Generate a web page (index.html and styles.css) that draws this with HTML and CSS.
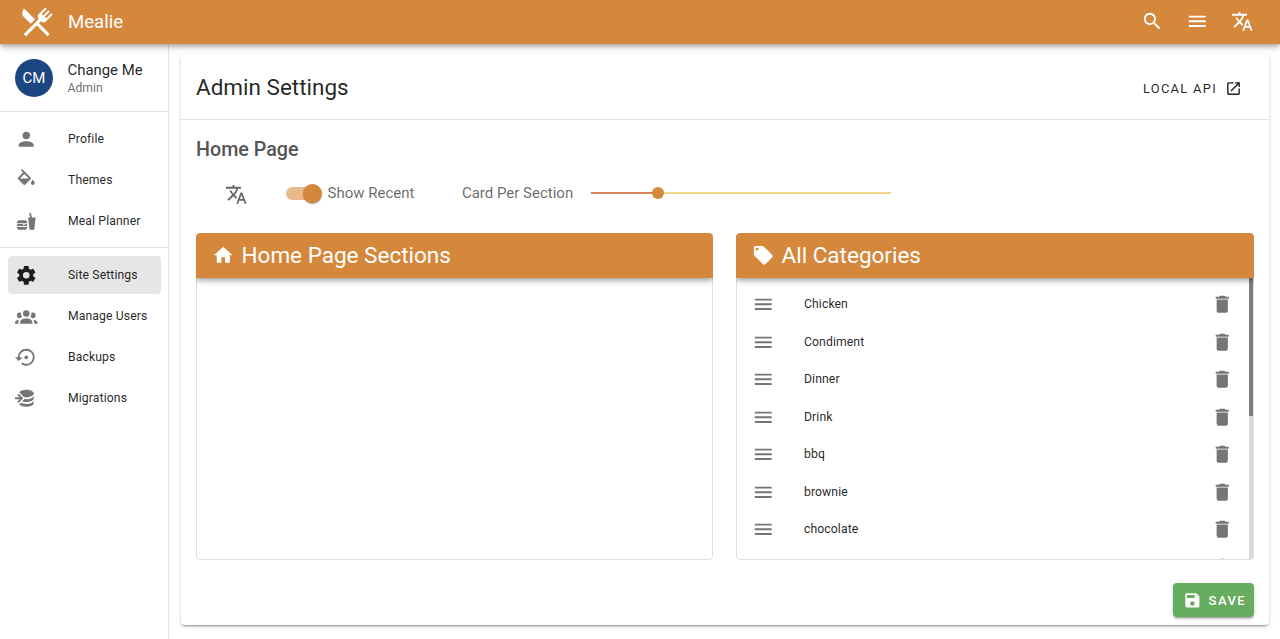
FILE: index.html
```html
<!DOCTYPE html>
<html lang="en">
<head>
<meta charset="utf-8">
<title>Mealie</title>
<link rel="stylesheet" href="styles.css">
</head>
<body>
<header class="appbar">
  <svg class="logo" viewBox="0 0 24 24"><path d="M8.1,13.34L3.91,9.16C2.35,7.59 2.35,5.06 3.91,3.5L10.93,10.5L8.1,13.34M13.41,13L20.29,19.88L18.88,21.29L12,14.41L5.12,21.29L3.71,19.88L13.36,10.22L13.16,10C12.38,9.23 12.38,7.97 13.16,7.19L17.5,2.82L18.43,3.74L15.19,7L16.15,7.94L19.39,4.69L20.31,5.61L17.06,8.85L18,9.81L21.26,6.56L22.18,7.5L17.81,11.84C17.03,12.62 15.77,12.62 15,11.84L14.78,11.64L13.41,13Z"/></svg>
  <span class="brand">Mealie</span>
  <div class="appbar-actions">
    <svg class="icon" viewBox="0 0 24 24"><path d="M9.5,3A6.5,6.5 0 0,1 16,9.5C16,11.11 15.41,12.59 14.44,13.73L14.71,14H15.5L20.5,19L19,20.5L14,15.5V14.71L13.73,14.44C12.59,15.41 11.11,16 9.5,16A6.5,6.5 0 0,1 3,9.5A6.5,6.5 0 0,1 9.5,3M9.5,5C7,5 5,7 5,9.5C5,12 7,14 9.5,14C12,14 14,12 14,9.5C14,7 12,5 9.5,5Z"/></svg>
    <svg class="icon" viewBox="0 0 24 24"><path d="M3,6H21V8H3V6M3,11H21V13H3V11M3,16H21V18H3V16Z"/></svg>
    <svg class="icon" viewBox="0 0 24 24"><path d="M12.87,15.07L10.33,12.56L10.36,12.53C12.1,10.59 13.34,8.36 14.07,6H17V4H10V2H8V4H1V6H12.17C11.5,7.92 10.44,9.75 9,11.35C8.07,10.32 7.3,9.19 6.69,8H4.69C5.42,9.63 6.42,11.17 7.67,12.56L2.58,17.58L4,19L9,14L12.11,17.11L12.87,15.07M18.5,10H16.5L12,22H14L15.12,19H19.87L21,22H23L18.5,10M15.88,17L17.5,12.67L19.12,17H15.88Z"/></svg>
  </div>
</header>
<div class="shell">
  <aside class="sidebar">
    <div class="user">
      <div class="avatar">CM</div>
      <div class="user-text">
        <div class="user-name">Change Me</div>
        <div class="user-role">Admin</div>
      </div>
    </div>
    <nav class="nav">
      <a class="nav-item"><svg class="icon" viewBox="0 0 24 24"><path d="M12,4A4,4 0 0,1 16,8A4,4 0 0,1 12,12A4,4 0 0,1 8,8A4,4 0 0,1 12,4M12,14C16.42,14 20,15.79 20,18V20H4V18C4,15.79 7.58,14 12,14Z"/></svg><span>Profile</span></a>
      <a class="nav-item"><svg class="icon" viewBox="0 0 24 24"><path d="M19,11.5C19,11.5 17,13.67 17,15A2,2 0 0,0 19,17A2,2 0 0,0 21,15C21,13.67 19,11.5 19,11.5M5.21,10L10,5.21L14.79,10M16.56,8.94L7.62,0L6.21,1.41L8.59,3.79L3.44,8.94C2.85,9.5 2.85,10.47 3.44,11.06L8.94,16.56C9.23,16.85 9.62,17 10,17C10.38,17 10.77,16.85 11.06,16.56L16.56,11.06C17.15,10.47 17.15,9.5 16.56,8.94Z"/></svg><span>Themes</span></a>
      <a class="nav-item"><svg class="icon" viewBox="0 0 24 24"><path d="M15.5,21L14,8H16.23L15.1,3.46L16.84,3L18.09,8H22L20.5,21H15.5M5,11H10A3,3 0 0,1 13,14H2A3,3 0 0,1 5,11M13,18A3,3 0 0,1 10,21H5A3,3 0 0,1 2,18H13M3,15H8L9.5,16.5L11,15H12A1,1 0 0,1 13,16A1,1 0 0,1 12,17H3A1,1 0 0,1 2,16A1,1 0 0,1 3,15Z"/></svg><span>Meal Planner</span></a>
    </nav>
    <nav class="nav nav-admin">
      <a class="nav-item is-active"><svg class="icon" viewBox="0 0 24 24"><path d="M12,15.5A3.5,3.5 0 0,1 8.5,12A3.5,3.5 0 0,1 12,8.5A3.5,3.5 0 0,1 15.5,12A3.5,3.5 0 0,1 12,15.5M19.43,12.97C19.47,12.65 19.5,12.33 19.5,12C19.5,11.67 19.47,11.34 19.43,11L21.54,9.37C21.73,9.22 21.78,8.95 21.66,8.73L19.66,5.27C19.54,5.05 19.27,4.96 19.05,5.05L16.56,6.05C16.04,5.66 15.5,5.32 14.87,5.07L14.5,2.42C14.46,2.18 14.25,2 14,2H10C9.75,2 9.54,2.18 9.5,2.42L9.13,5.07C8.5,5.32 7.96,5.66 7.44,6.05L4.95,5.05C4.73,4.96 4.46,5.05 4.34,5.27L2.34,8.73C2.21,8.95 2.27,9.22 2.46,9.37L4.57,11C4.53,11.34 4.5,11.67 4.5,12C4.5,12.33 4.53,12.65 4.57,12.97L2.46,14.63C2.27,14.78 2.21,15.05 2.34,15.27L4.34,18.73C4.46,18.95 4.73,19.03 4.95,18.95L7.44,17.94C7.96,18.34 8.5,18.68 9.13,18.93L9.5,21.58C9.54,21.82 9.75,22 10,22H14C14.25,22 14.46,21.82 14.5,21.58L14.87,18.93C15.5,18.67 16.04,18.34 16.56,17.94L19.05,18.95C19.27,19.03 19.54,18.95 19.66,18.73L21.66,15.27C21.78,15.05 21.73,14.78 21.54,14.63L19.43,12.97Z"/></svg><span>Site Settings</span></a>
      <a class="nav-item"><svg class="icon" viewBox="0 0 24 24"><path d="M12,5.5A3.5,3.5 0 0,1 15.5,9A3.5,3.5 0 0,1 12,12.5A3.5,3.5 0 0,1 8.5,9A3.5,3.5 0 0,1 12,5.5M5,8C5.56,8 6.08,8.15 6.53,8.42C6.38,9.85 6.8,11.27 7.66,12.38C7.16,13.34 6.16,14 5,14A3,3 0 0,1 2,11A3,3 0 0,1 5,8M19,8A3,3 0 0,1 22,11A3,3 0 0,1 19,14C17.84,14 16.84,13.34 16.34,12.38C17.2,11.27 17.62,9.85 17.47,8.42C17.92,8.15 18.44,8 19,8M5.5,18.25C5.5,16.18 8.41,14.5 12,14.5C15.59,14.5 18.5,16.18 18.5,18.25V20H5.5V18.25M0,20V18.5C0,17.11 1.89,15.94 4.45,15.6C3.86,16.28 3.5,17.22 3.5,18.25V20H0M24,20H20.5V18.25C20.5,17.22 20.14,16.28 19.55,15.6C22.11,15.94 24,17.11 24,18.5V20Z"/></svg><span>Manage Users</span></a>
      <a class="nav-item"><svg class="icon" viewBox="0 0 24 24"><path d="M12,3A9,9 0 0,0 3,12H0L4,16L8,12H5A7,7 0 0,1 12,5A7,7 0 0,1 19,12A7,7 0 0,1 12,19C10.5,19 9.09,18.5 7.94,17.7L6.5,19.14C8.04,20.3 9.94,21 12,21A9,9 0 0,0 21,12A9,9 0 0,0 12,3M14,12A2,2 0 0,0 12,10A2,2 0 0,0 10,12A2,2 0 0,0 12,14A2,2 0 0,0 14,12Z"/></svg><span>Backups</span></a>
      <a class="nav-item"><svg class="icon" viewBox="0 0 24 24"><path d="M12,3C8.59,3 5.69,4.07 4.54,5.57L9.79,10.82C10.5,10.93 11.22,11 12,11C16.42,11 20,9.21 20,7C20,4.79 16.42,3 12,3M3.92,7.08L2.5,8.5L5,11H0V13H5L2.5,15.5L3.92,16.92L8.84,12M20,9C20,11.21 16.42,13 12,13C11.34,13 10.7,12.95 10.09,12.87L7.62,15.34C8.88,15.75 10.38,16 12,16C16.42,16 20,14.21 20,12M20,14C20,16.21 16.42,18 12,18C9.72,18 7.67,17.5 6.21,16.75L4.53,18.43C5.67,19.93 8.58,21 12,21C16.42,21 20,19.21 20,17"/></svg><span>Migrations</span></a>
    </nav>
  </aside>
  <main class="main">
    <section class="card">
      <div class="card-head">
        <h1 class="card-title">Admin Settings</h1>
        <a class="api-link">LOCAL API<svg class="icon-sm" viewBox="0 0 24 24"><path d="M14,3V5H17.59L7.76,14.83L9.17,16.24L19,6.41V10H21V3M19,19H5V5H12V3H5C3.89,3 3,3.9 3,5V19A2,2 0 0,0 5,21H19A2,2 0 0,0 21,19V12H19V19Z"/></svg></a>
      </div>
      <div class="card-body">
        <h2 class="section-title">Home Page</h2>
        <div class="controls">
          <svg class="lang-icon" viewBox="0 0 24 24"><path d="M12.87,15.07L10.33,12.56L10.36,12.53C12.1,10.59 13.34,8.36 14.07,6H17V4H10V2H8V4H1V6H12.17C11.5,7.92 10.44,9.75 9,11.35C8.07,10.32 7.3,9.19 6.69,8H4.69C5.42,9.63 6.42,11.17 7.67,12.56L2.58,17.58L4,19L9,14L12.11,17.11L12.87,15.07M18.5,10H16.5L12,22H14L15.12,19H19.87L21,22H23L18.5,10M15.88,17L17.5,12.67L19.12,17H15.88Z"/></svg>
          <div class="switch"><span class="switch-thumb"></span></div>
          <span class="control-label show-label">Show Recent</span>
          <span class="control-label card-label">Card Per Section</span>
          <div class="slider"><span class="slider-fill"></span><span class="slider-thumb"></span></div>
        </div>
        <div class="panels">
          <div class="panel">
            <div class="panel-head">
              <svg class="panel-icon" viewBox="0 0 24 24"><path d="M10,20V14H14V20H19V12H22L12,3L2,12H5V20H10Z"/></svg>
              <span>Home Page Sections</span>
            </div>
            <div class="panel-body"></div>
          </div>
          <div class="panel">
            <div class="panel-head">
              <svg class="panel-icon" viewBox="0 0 24 24"><path d="M5.5,7A1.5,1.5 0 0,1 4,5.5A1.5,1.5 0 0,1 5.5,4A1.5,1.5 0 0,1 7,5.5A1.5,1.5 0 0,1 5.5,7M21.41,11.58L12.41,2.58C12.05,2.22 11.55,2 11,2H4C2.89,2 2,2.89 2,4V11C2,11.55 2.22,12.05 2.59,12.41L11.58,21.41C11.95,21.77 12.45,22 13,22C13.55,22 14.05,21.77 14.41,21.41L21.41,14.41C21.78,14.05 22,13.55 22,13C22,12.44 21.77,11.94 21.41,11.58Z"/></svg>
              <span>All Categories</span>
            </div>
            <div class="panel-body cat-list">
              <div class="cat-row"><svg class="row-icon" viewBox="0 0 24 24"><path d="M3,6H21V8H3V6M3,11H21V13H3V11M3,16H21V18H3V16Z"/></svg><span class="cat-name">Chicken</span><svg class="row-icon" viewBox="0 0 24 24"><path d="M19,4H15.5L14.5,3H9.5L8.5,4H5V6H19M6,19A2,2 0 0,0 8,21H16A2,2 0 0,0 18,19V7H6V19Z"/></svg></div>
              <div class="cat-row"><svg class="row-icon" viewBox="0 0 24 24"><path d="M3,6H21V8H3V6M3,11H21V13H3V11M3,16H21V18H3V16Z"/></svg><span class="cat-name">Condiment</span><svg class="row-icon" viewBox="0 0 24 24"><path d="M19,4H15.5L14.5,3H9.5L8.5,4H5V6H19M6,19A2,2 0 0,0 8,21H16A2,2 0 0,0 18,19V7H6V19Z"/></svg></div>
              <div class="cat-row"><svg class="row-icon" viewBox="0 0 24 24"><path d="M3,6H21V8H3V6M3,11H21V13H3V11M3,16H21V18H3V16Z"/></svg><span class="cat-name">Dinner</span><svg class="row-icon" viewBox="0 0 24 24"><path d="M19,4H15.5L14.5,3H9.5L8.5,4H5V6H19M6,19A2,2 0 0,0 8,21H16A2,2 0 0,0 18,19V7H6V19Z"/></svg></div>
              <div class="cat-row"><svg class="row-icon" viewBox="0 0 24 24"><path d="M3,6H21V8H3V6M3,11H21V13H3V11M3,16H21V18H3V16Z"/></svg><span class="cat-name">Drink</span><svg class="row-icon" viewBox="0 0 24 24"><path d="M19,4H15.5L14.5,3H9.5L8.5,4H5V6H19M6,19A2,2 0 0,0 8,21H16A2,2 0 0,0 18,19V7H6V19Z"/></svg></div>
              <div class="cat-row"><svg class="row-icon" viewBox="0 0 24 24"><path d="M3,6H21V8H3V6M3,11H21V13H3V11M3,16H21V18H3V16Z"/></svg><span class="cat-name">bbq</span><svg class="row-icon" viewBox="0 0 24 24"><path d="M19,4H15.5L14.5,3H9.5L8.5,4H5V6H19M6,19A2,2 0 0,0 8,21H16A2,2 0 0,0 18,19V7H6V19Z"/></svg></div>
              <div class="cat-row"><svg class="row-icon" viewBox="0 0 24 24"><path d="M3,6H21V8H3V6M3,11H21V13H3V11M3,16H21V18H3V16Z"/></svg><span class="cat-name">brownie</span><svg class="row-icon" viewBox="0 0 24 24"><path d="M19,4H15.5L14.5,3H9.5L8.5,4H5V6H19M6,19A2,2 0 0,0 8,21H16A2,2 0 0,0 18,19V7H6V19Z"/></svg></div>
              <div class="cat-row"><svg class="row-icon" viewBox="0 0 24 24"><path d="M3,6H21V8H3V6M3,11H21V13H3V11M3,16H21V18H3V16Z"/></svg><span class="cat-name">chocolate</span><svg class="row-icon" viewBox="0 0 24 24"><path d="M19,4H15.5L14.5,3H9.5L8.5,4H5V6H19M6,19A2,2 0 0,0 8,21H16A2,2 0 0,0 18,19V7H6V19Z"/></svg></div>
              <div class="cat-row"><span class="row-spacer"></span><span class="cat-name"></span><svg class="row-icon" viewBox="0 0 24 24"><path d="M19,4H15.5L14.5,3H9.5L8.5,4H5V6H19M6,19A2,2 0 0,0 8,21H16A2,2 0 0,0 18,19V7H6V19Z"/></svg></div>
              <div class="scrollbar"><span class="scrollbar-thumb"></span></div>
            </div>
          </div>
        </div>
        <div class="actions">
          <button class="save"><svg class="save-icon" viewBox="0 0 24 24"><path d="M15,9H5V5H15M12,19A3,3 0 0,1 9,16A3,3 0 0,1 12,13A3,3 0 0,1 15,16A3,3 0 0,1 12,19M17,3H5C3.89,3 3,3.9 3,5V19A2,2 0 0,0 5,21H19A2,2 0 0,0 21,19V7L17,3Z"/></svg>SAVE</button>
        </div>
      </div>
    </section>
  </main>
</div>
</body>
</html>
```
FILE: styles.css
```css
* { box-sizing: border-box; }
html, body { height: 100%; }
body {
  margin: 0;
  height: 639px;
  overflow: hidden;
  display: flex;
  flex-direction: column;
  background: #fff;
  font-family: Roboto, "Liberation Sans", sans-serif;
  color: rgba(0, 0, 0, .87);
}
svg { display: block; flex: none; fill: currentColor; }
h1, h2 { margin: 0; }

.appbar {
  position: relative;
  z-index: 2;
  flex: none;
  height: 44px;
  display: flex;
  align-items: center;
  padding-left: 18px;
  padding-right: 27px;
  background: #d5873c;
  color: #fff;
  box-shadow: 0 2px 4px -1px rgba(0,0,0,.2), 0 4px 5px rgba(0,0,0,.14), 0 1px 10px rgba(0,0,0,.12);
}
.logo { width: 37.5px; height: 37.5px; }
.brand { margin-left: 12.5px; font-size: 18.6px; font-weight: 400; }
.appbar-actions { margin-left: auto; display: flex; gap: 22.5px; margin-top: -1px; }
.icon { width: 22.5px; height: 22.5px; }

.shell { flex: 1; min-height: 0; display: flex; }
.sidebar {
  flex: none;
  width: 169px;
  border-right: 1px solid #e4e4e4;
}
.user {
  height: 68px;
  display: flex;
  align-items: center;
  padding-left: 15px;
  border-bottom: 1px solid #e4e4e4;
}
.avatar {
  width: 38px;
  height: 38px;
  margin-right: 14.5px;
  border-radius: 50%;
  background: #1c4682;
  color: #fff;
  font-size: 15px;
  display: flex;
  align-items: center;
  justify-content: center;
}
.user-text { margin-top: 1px; }
.user-name { font-size: 14.9px; line-height: 20px; }
.user-role { font-size: 12.2px; line-height: 17px; color: rgba(0,0,0,.6); }

.nav { padding: 8px 7px 7px 8px; }
.nav-admin { padding-top: 8.6px; border-top: 1px solid #e4e4e4; }
.nav-item {
  height: 37.5px;
  margin-bottom: 3.5px;
  padding-left: 7px;
  display: flex;
  align-items: center;
  border-radius: 4px;
  font-size: 12.2px;
  font-weight: 400;
  letter-spacing: .12px;
  color: rgba(0,0,0,.87);
}
.nav-item:last-child { margin-bottom: 0; }
.nav-item .icon { margin-right: 30.5px; color: rgba(0,0,0,.54); }
.nav-item.is-active { background: #e6e6e6; }
.nav-item.is-active .icon { color: rgba(0,0,0,.87); }

.main { flex: 1; min-width: 0; padding: 11px 11px 14px 12px; }
.card {
  height: 100%;
  background: #fff;
  border-radius: 4px;
  display: flex;
  flex-direction: column;
  box-shadow: 0 3px 1px -2px rgba(0,0,0,.2), 0 2px 2px rgba(0,0,0,.14), 0 1px 5px rgba(0,0,0,.12);
}
.card-head {
  flex: none;
  height: 65px;
  display: flex;
  align-items: center;
  justify-content: space-between;
  padding: 0 27px 0 15px;
  border-bottom: 1px solid #e0e0e0;
}
.card-title { font-size: 22.5px; font-weight: 400; margin-top: -1px; }
.api-link {
  display: flex;
  align-items: center;
  gap: 8px;
  font-size: 12.9px;
  font-weight: 400;
  letter-spacing: 1.3px;
  margin-top: 2px;
}
.icon-sm { width: 17px; height: 17px; }

.card-body { flex: 1; min-height: 0; padding: 0 15px; display: flex; flex-direction: column; }
.section-title { margin-top: 19px; font-size: 19.7px; line-height: 22px; font-weight: 500; color: #555; }
.controls {
  height: 38px;
  margin-top: 13px;
  display: flex;
  align-items: center;
  color: rgba(0,0,0,.6);
}
.lang-icon { width: 22.5px; height: 22.5px; margin-left: 29px; margin-top: 2px; }
.switch {
  position: relative;
  width: 33px;
  height: 13px;
  margin-left: 38px;
  border-radius: 7px;
  background: #eab98c;
}
.switch-thumb {
  position: absolute;
  right: -3px;
  top: -3px;
  width: 19px;
  height: 19px;
  border-radius: 50%;
  background: #d5873c;
  box-shadow: 0 2px 1px -1px rgba(0,0,0,.2), 0 1px 1px rgba(0,0,0,.14), 0 1px 3px rgba(0,0,0,.12);
}
.control-label { font-size: 15px; color: rgba(0,0,0,.6); }
.show-label { margin-left: 9px; }
.card-label { margin-left: 47.5px; }
.slider {
  position: relative;
  width: 300px;
  height: 2px;
  margin-left: 18px;
  background: #f5d78e;
}
.slider-fill { display: block; width: 66px; height: 2px; background: #d8845a; }
.slider-thumb {
  position: absolute;
  left: 61px;
  top: -5px;
  width: 12px;
  height: 12px;
  border-radius: 50%;
  background: #d5873c;
}

.panels {
  flex: none;
  height: 327px;
  margin-top: 21px;
  display: grid;
  grid-template-columns: 517px 518px;
  column-gap: 23px;
}
.panel {
  height: 327px;
  overflow: hidden;
  display: flex;
  flex-direction: column;
  border-radius: 4px;
  background: #fff;
}
.panel-body {
  position: relative;
  flex: 1;
  min-height: 0;
  overflow: hidden;
  border: 1px solid #e0e0e0;
  border-top: 0;
  border-radius: 0 0 4px 4px;
}
.panel-head {
  position: relative;
  z-index: 1;
  flex: none;
  height: 45px;
  padding-left: 16px;
  padding-bottom: 1px;
  display: flex;
  align-items: center;
  gap: 7px;
  background: #d5873c;
  color: #fff;
  font-size: 22.5px;
  border-radius: 4px 4px 0 0;
  box-shadow: 0 2px 4px -1px rgba(0,0,0,.2), 0 4px 5px rgba(0,0,0,.14), 0 1px 10px rgba(0,0,0,.12);
}
.panel-icon { width: 22.5px; height: 22.5px; }
.cat-list { padding-top: 7.5px; }
.cat-row {
  height: 37.5px;
  display: flex;
  align-items: center;
  padding-left: 15px;
  padding-right: 20px;
  color: rgba(0,0,0,.54);
}
.cat-row .row-icon { width: 22.5px; height: 22.5px; }
.row-spacer { flex: none; width: 22.5px; }
.cat-name {
  flex: 1;
  margin-left: 29.5px;
  font-size: 12.2px;
  color: rgba(0,0,0,.87);
  letter-spacing: .1px;
}
.scrollbar {
  position: absolute;
  right: 0;
  top: 0;
  bottom: 0;
  width: 4px;
  background: #d9d9d9;
}
.scrollbar-thumb { display: block; width: 100%; height: 138px; background: #7d7d7d; }

.actions { flex: none; display: flex; justify-content: flex-end; padding-top: 23px; }
.save {
  width: 81px;
  height: 34px;
  padding: 0 0 0 2px;
  border: 0;
  border-radius: 4px;
  display: flex;
  align-items: center;
  justify-content: center;
  gap: 7px;
  background: #66ad5f;
  color: #fff;
  font-family: inherit;
  font-size: 13.1px;
  font-weight: 500;
  letter-spacing: 1.4px;
  box-shadow: 0 3px 1px -2px rgba(0,0,0,.2), 0 2px 2px rgba(0,0,0,.14), 0 1px 5px rgba(0,0,0,.12);
}
.save-icon { width: 18.75px; height: 18.75px; }
```
